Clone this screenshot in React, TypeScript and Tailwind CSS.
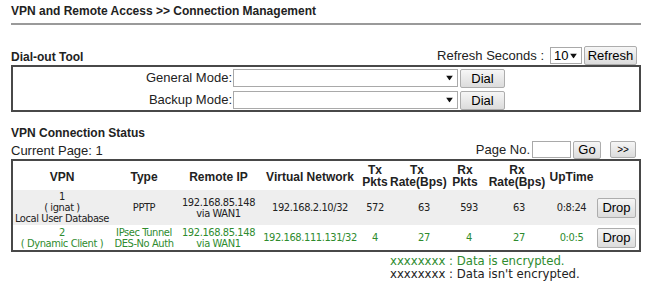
import React from 'react';

const arial = "font-['Liberation_Sans',Arial,sans-serif]";
const tahoma = "font-['DejaVu_Sans_Condensed','DejaVu_Sans',sans-serif]";

function Btn({ w, h, children, className = '' }: { w: string; h: string; children: React.ReactNode; className?: string }) {
  return (
    <div
      className={`${w} ${h} ${arial} flex items-center justify-center border border-[#adadad] rounded-[2px] bg-gradient-to-b from-[#f6f6f6] to-[#dcdcdc] text-[13px] text-black leading-none ${className}`}
    >
      {children}
    </div>
  );
}

function Sel({ w, h, label = '' }: { w: string; h: string; label?: string }) {
  return (
    <div className={`${w} ${h} ${arial} relative flex items-center border border-[#a9a9a9] bg-white text-[13px] text-black pl-[3px]`}>
      {label}
      <svg className="absolute right-[4px] top-1/2 -translate-y-1/2" width="7" height="5" viewBox="0 0 7 5">
        <path d="M0 0 H7 L3.5 5 Z" fill="#111" />
      </svg>
    </div>
  );
}

type Row = {
  vpn: string[];
  type: string[];
  ip: string[];
  vn: string;
  txp: string;
  txr: string;
  rxp: string;
  rxr: string;
  up: string;
  enc: boolean;
};

const rows: Row[] = [
  {
    vpn: ['1', '( ignat )', 'Local User Database'],
    type: ['PPTP'],
    ip: ['192.168.85.148', 'via WAN1'],
    vn: '192.168.2.10/32',
    txp: '572',
    txr: '63',
    rxp: '593',
    rxr: '63',
    up: '0:8:24',
    enc: false,
  },
  {
    vpn: ['2', '( Dynamic Client )'],
    type: ['IPsec Tunnel', 'DES-No Auth'],
    ip: ['192.168.85.148', 'via WAN1'],
    vn: '192.168.111.131/32',
    txp: '4',
    txr: '27',
    rxp: '4',
    rxr: '27',
    up: '0:0:5',
    enc: true,
  },
];

function Lines({ l }: { l: string[] }) {
  return (
    <>
      {l.map((s, i) => (
        <div key={i}>{s}</div>
      ))}
    </>
  );
}

export default function App() {
  return (
    <div className={`w-[649px] h-[288px] bg-white overflow-hidden ${arial} text-[#222]`}>
      <div className="ml-[11px] w-[630px]">
        {/* title */}
        <div className="pt-[4px] h-[25px] border-b-2 border-[#9a9a9a] text-[12px] leading-[14px] font-bold text-[#222]">
          VPN and Remote Access &gt;&gt; Connection Management
        </div>

        {/* dial-out header */}
        <div className="mt-[21px] h-[19px] flex items-center justify-between">
          <div className="text-[12px] font-bold leading-[14px] pt-[3px]">Dial-out Tool</div>
          <div className="flex items-center pr-[4px]">
            <span className="text-[13px] text-[#222] mr-[6px]">Refresh Seconds :</span>
            <Sel w="w-[32px]" h="h-[17px]" label="10" />
            <Btn w="w-[53px]" h="h-[19px]" className="ml-[2px]">Refresh</Btn>
          </div>
        </div>

        {/* dial-out box */}
        <div className="h-[47px] border-2 border-[#484848] pt-[1px]">
          <div className="flex items-center h-[20px]">
            <div className="w-[220px] text-right text-[13px] text-[#222] pr-[1px]">General Mode:</div>
            <Sel w="w-[225px]" h="h-[18px]" />
            <Btn w="w-[45px]" h="h-[19px]" className="ml-[2px]">Dial</Btn>
          </div>
          <div className="flex items-center h-[20px] mt-[2px]">
            <div className="w-[220px] text-right text-[13px] text-[#222] pr-[1px]">Backup Mode:</div>
            <Sel w="w-[225px]" h="h-[18px]" />
            <Btn w="w-[45px]" h="h-[19px]" className="ml-[2px]">Dial</Btn>
          </div>
        </div>

        {/* status */}
        <div className="mt-[14px] text-[12px] font-bold leading-[14px]">VPN Connection Status</div>
        <div className="h-[19px] flex items-center justify-between">
          <div className="text-[13px] leading-[15px] pt-[2px]">Current Page: 1</div>
          <div className="flex items-center pr-[5px]">
            <span className="text-[13px] mr-[2px]">Page No.</span>
            <div className="w-[39px] h-[17px] border border-[#a9a9a9] bg-white" />
            <Btn w="w-[28px]" h="h-[18px]" className="ml-[2px]">Go</Btn>
            <Btn w="w-[26px]" h="h-[17px]" className="ml-[9px] !text-[10px]">&gt;&gt;</Btn>
          </div>
        </div>

        {/* table */}
        <div className="border-2 border-[#484848]">
          <table className="table-fixed border-collapse w-[626px]">
            <colgroup>
              <col className="w-[98px]" />
              <col className="w-[66px]" />
              <col className="w-[83px]" />
              <col className="w-[100px]" />
              <col className="w-[30px]" />
              <col className="w-[54px]" />
              <col className="w-[42px]" />
              <col className="w-[62px]" />
              <col className="w-[47px]" />
              <col className="w-[44px]" />
            </colgroup>
            <thead>
              <tr className="h-[29px] text-[12px] font-bold leading-[12px] text-[#222] text-center whitespace-nowrap">
                <th className="p-0 pt-[2px]">VPN</th>
                <th className="p-0 pt-[2px]">Type</th>
                <th className="p-0 pt-[2px]">Remote IP</th>
                <th className="p-0 pt-[2px]">Virtual Network</th>
                <th className="p-0">Tx<br />Pkts</th>
                <th className="p-0">Tx<br />Rate(Bps)</th>
                <th className="p-0">Rx<br />Pkts</th>
                <th className="p-0">Rx<br />Rate(Bps)</th>
                <th className="p-0 pt-[2px]">UpTime</th>
                <th className="p-0" />
              </tr>
            </thead>
            <tbody>
              {rows.map((r, i) => (
                <tr
                  key={i}
                  className={`${i === 0 ? 'h-[35px] bg-[#eeeeee]' : 'h-[25px] bg-white'} ${tahoma} text-[11px] leading-[11px] tracking-[-0.4px] text-center whitespace-nowrap ${
                    r.enc ? 'text-[#2e8b2e]' : 'text-[#222]'
                  }`}
                >
                  <td className="p-0"><Lines l={r.vpn} /></td>
                  <td className="p-0"><Lines l={r.type} /></td>
                  <td className="p-0"><Lines l={r.ip} /></td>
                  <td className="p-0">{r.vn}</td>
                  <td className="p-0">{r.txp}</td>
                  <td className="p-0 pl-[14px]">{r.txr}</td>
                  <td className="p-0 pl-[8px]">{r.rxp}</td>
                  <td className="p-0 pl-[4px]">{r.rxr}</td>
                  <td className="p-0">{r.up}</td>
                  <td className="p-0 tracking-normal">
                    <Btn w="w-[39px]" h="h-[20px]" className="ml-[2px]">Drop</Btn>
                  </td>
                </tr>
              ))}
            </tbody>
          </table>
        </div>

        {/* legend */}
        <div className={`ml-[379px] mt-[2px] ${tahoma} text-[13px] leading-[13px]`}>
          <div className="text-[#2e8b2e]">xxxxxxxx : Data is encrypted.</div>
          <div className="text-[#222]">xxxxxxxx : Data isn't encrypted.</div>
        </div>
      </div>
    </div>
  );
}
